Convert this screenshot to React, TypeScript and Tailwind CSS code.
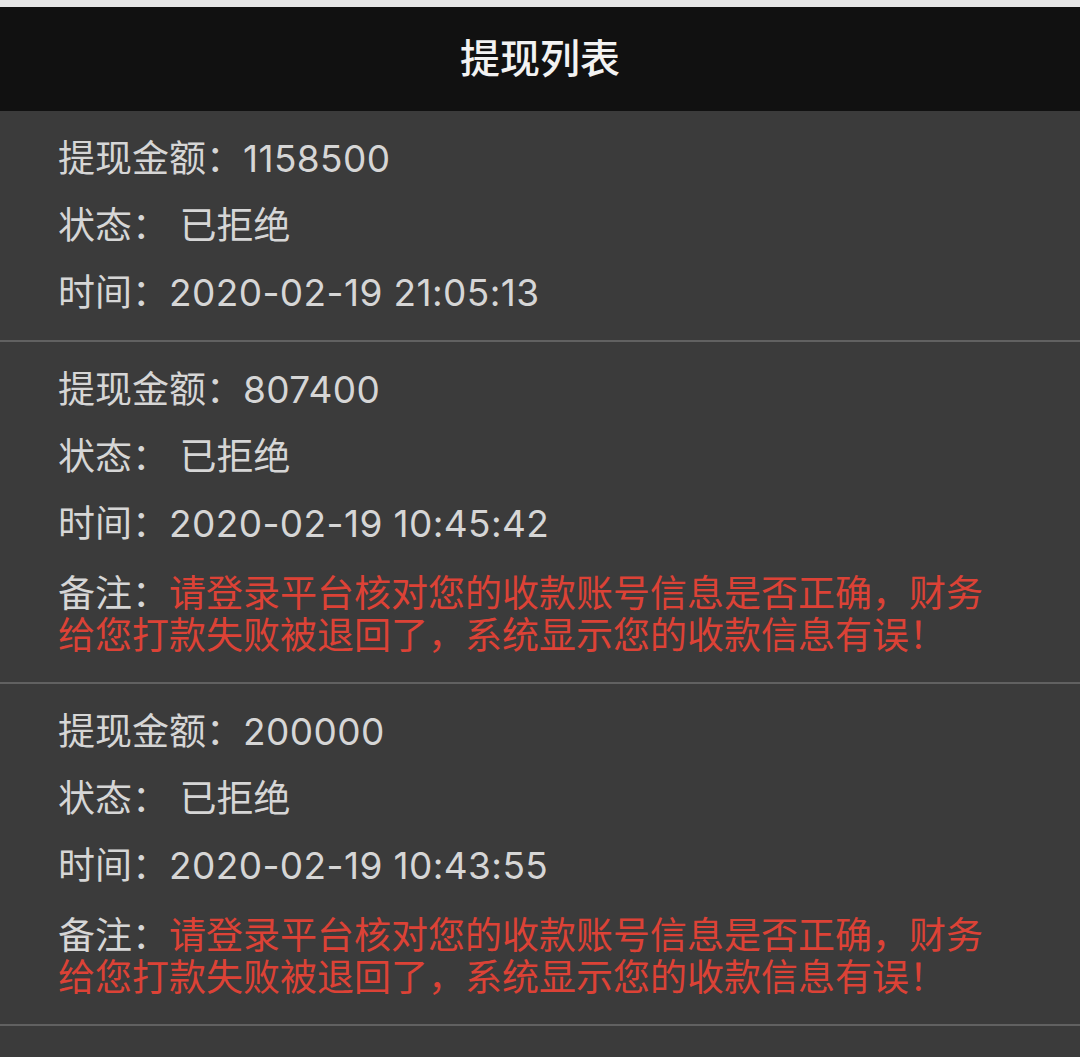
import React from "react";

type Item = {
  amount: string;
  status: string;
  time: string;
  note?: string;
};

const items: Item[] = [
  { amount: "1158500", status: "已拒绝", time: "2020-02-19 21:05:13" },
  {
    amount: "807400",
    status: "已拒绝",
    time: "2020-02-19 10:45:42",
    note: "请登录平台核对您的收款账号信息是否正确，财务给您打款失败被退回了，系统显示您的收款信息有误！",
  },
  {
    amount: "200000",
    status: "已拒绝",
    time: "2020-02-19 10:43:55",
    note: "请登录平台核对您的收款账号信息是否正确，财务给您打款失败被退回了，系统显示您的收款信息有误！",
  },
];

export default function App() {
  return (
    <div
      className="w-[1080px] min-h-[1057px] bg-[#3b3b3b] flex flex-col"
      style={{ fontFamily: 'Inter, "Noto Sans CJK SC", sans-serif' }}
    >
      <div className="h-[7px] bg-[#e6e6e6]" />
      <div className="h-[104px] bg-[#111111] flex items-center justify-center">
        <span className="text-[40px] text-[#f2f2f2] font-medium leading-none">提现列表</span>
      </div>
      {items.map((it, i) => (
        <div key={i} className="border-b-2 border-[#616161] px-[58px] pt-[14px] pb-[14px]">
          <div className="text-[37px] leading-[67px] text-[#d6d6d6]">
            提现金额：<span className="tracking-[0.4px]">{it.amount}</span>
          </div>
          <div className="text-[37px] leading-[67px] text-[#d6d6d6]">状态： {it.status}</div>
          <div className="text-[37px] leading-[67px] text-[#d6d6d6]">
            时间：<span className="tracking-[0.4px]">{it.time}</span>
          </div>
          {it.note && (
            <div className="max-w-[950px] text-[37px] leading-[42px] mt-[16px] mb-[11px] text-[#d6d6d6]">
              备注：<span className="text-[#dc4236]">{it.note}</span>
            </div>
          )}
        </div>
      ))}
    </div>
  );
}
